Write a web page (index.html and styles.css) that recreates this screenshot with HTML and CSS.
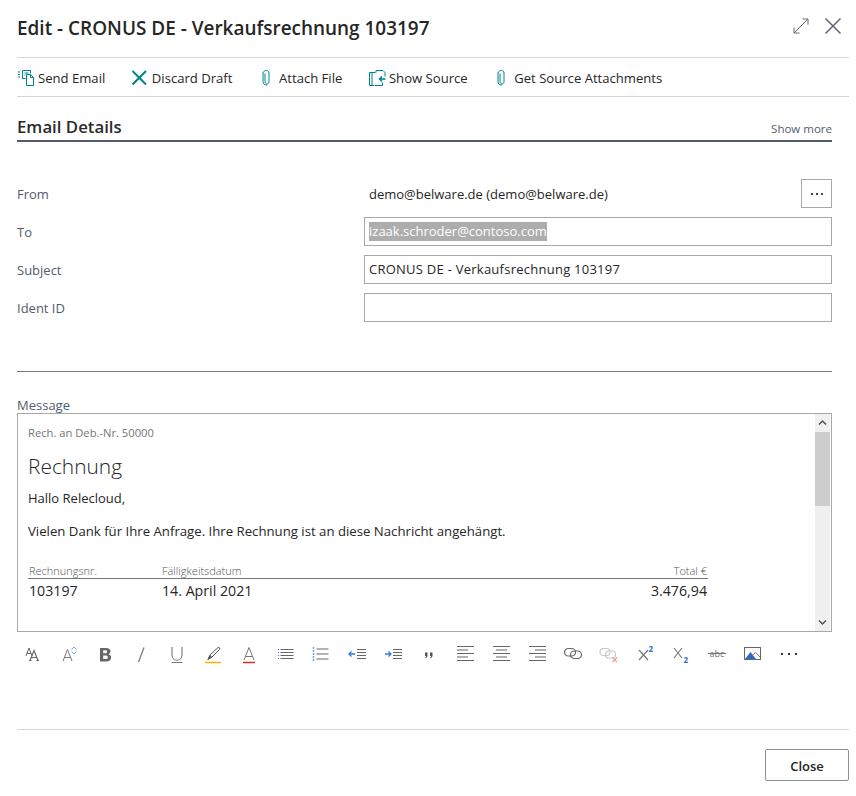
FILE: index.html
```html
<!DOCTYPE html>
<html lang="en">
<head>
<meta charset="UTF-8" />
<title>Edit - CRONUS DE - Verkaufsrechnung 103197</title>
<link rel="stylesheet" href="styles.css">
</head>
<body>
<div class="dialog">
  <div class="title-bar">
    <h1 class="title">Edit - CRONUS DE - Verkaufsrechnung 103197</h1>
    <div class="window-btns">
      <svg width="16" height="16" viewBox="0 0 16 16" fill="none" stroke="#6b6b6b" stroke-width="1"><path d="M1 15 15 1M9.500 1H15V6.500M1 9.500V15H6.500"/></svg>
      <svg width="18" height="18" viewBox="0 0 18 18" fill="none" stroke="#5f6670" stroke-width="1.500"><path d="M1.500 1.500 16.500 16.500M16.500 1.500 1.500 16.500"/></svg>
    </div>
  </div>

  <div class="command-bar">
    <button class="cmd">
      <svg class="cmd-icon" viewBox="0 0 21 18" fill="none" stroke="#00828a"><path d="M1 3h2M1 5.500h2M1 8h2M5.500 1.500h8v3M5.500 1.500v8h3M7.500 4h4M7.500 6h1"/><path d="M9.500 5.500h4l3 3v8h-7zM13.500 5.500v3h3"/></svg>
      <span>Send Email</span>
    </button>
    <button class="cmd">
      <svg class="cmd-icon" viewBox="0 0 21 18" fill="none" stroke="#00828a" stroke-width="2"><path d="M1.500 2 15 15.500M15 2 1.500 15.500"/></svg>
      <span>Discard Draft</span>
    </button>
    <button class="cmd">
      <svg class="cmd-icon" viewBox="0 0 21 18" fill="none" stroke="#00828a"><path d="M7 4.500v8c0 1.500 1 2.500 2 2.500s2-1 2-2.500v-8.500c0-1.700-1-2.500-2.500-2.500s-3.500.8-3.500 2.500v8.500c0 2.500 1.500 3.500 4 3.500"/></svg>
      <span>Attach File</span>
    </button>
    <button class="cmd">
      <svg class="cmd-icon" viewBox="0 0 21 18" fill="none" stroke="#00828a"><path d="M8 3.500v-2h7l2 2v4M6 16.500h-4.500V3.500h6M4 3.500v13M6.500 16.500h8v-3"/><path d="M17.500 10h-6M14 7.500 11.500 10 14 12.500" stroke-width="1.500"/></svg>
      <span>Show Source</span>
    </button>
    <button class="cmd">
      <svg class="cmd-icon" viewBox="0 0 21 18" fill="none" stroke="#00828a"><path d="M7 4.500v8c0 1.500 1 2.500 2 2.500s2-1 2-2.500v-8.500c0-1.700-1-2.500-2.500-2.500s-3.500.8-3.500 2.500v8.500c0 2.500 1.500 3.500 4 3.500"/></svg>
      <span>Get Source Attachments</span>
    </button>
  </div>

  <div class="content">
    <div class="section-head">
      <h2>Email Details</h2>
      <span class="show-more">Show more</span>
    </div>

    <div class="form">
      <label class="label">From</label>
      <div class="from-value">
        <span>demo@belware.de (demo@belware.de)</span>
        <button class="dots-btn" aria-label="More">
          <svg width="14" height="4" viewBox="0 0 14 4" fill="#444"><rect x="1" y="1" width="2" height="2"/><rect x="6" y="1" width="2" height="2"/><rect x="11" y="1" width="2" height="2"/></svg>
        </button>
      </div>
      <label class="label">To</label>
      <div class="input"><span class="selected">izaak.schroder@contoso.com</span></div>
      <label class="label">Subject</label>
      <div class="input subject">CRONUS DE - Verkaufsrechnung 103197</div>
      <label class="label">Ident ID</label>
      <div class="input"></div>
    </div>

    <div class="message-label">Message</div>
    <div class="editor">
      <div class="editor-body">
        <p class="bill-to">Rech. an Deb.-Nr. 50000</p>
        <p class="doc-title">Rechnung</p>
        <p class="greeting">Hallo Relecloud,</p>
        <p class="thanks">Vielen Dank für Ihre Anfrage. Ihre Rechnung ist an diese Nachricht angehängt.</p>
        <div class="invoice">
          <span class="inv-head">Rechnungsnr.</span>
          <span class="inv-head">Fälligkeitsdatum</span>
          <span class="inv-head amount">Total €</span>
          <span class="inv-cell">103197</span>
          <span class="inv-cell">14. April 2021</span>
          <span class="inv-cell amount">3.476,94</span>
        </div>
      </div>
      <div class="scrollbar">
        <svg width="15" height="18" viewBox="0 0 15 18" fill="none" stroke="#505050" stroke-width="1.500"><path d="M4 10.500 7.500 7 11 10.500"/></svg>
        <div class="scroll-track"><div class="scroll-thumb"></div></div>
        <svg width="15" height="18" viewBox="0 0 15 18" fill="none" stroke="#505050" stroke-width="1.500"><path d="M4 7.500 7.500 11 11 7.500"/></svg>
      </div>
    </div>

    <div class="format-bar">
      <button class="fmt"><svg viewBox="0 0 24 24" fill="none" stroke="#666"><path d="M5 14 8 6 11 14M6 11.500h4"/><path d="M9 18.500 13 8.500 17 18.500M10.500 15.500h5" stroke-width="1.200"/><path d="M8 18.500h2.500M15.500 18.500h2.500" stroke-width="1"/></svg></button>
      <button class="fmt"><svg viewBox="0 0 24 24" fill="none" stroke="#777"><path d="M6 19 10.500 7.500 15 19M7.500 15.500h6"/><path d="M14.500 7.500 17 5 19.500 7.500M14.500 9.500 17 12 19.500 9.500" stroke="#4a90e2" stroke-width=".8"/></svg></button>
      <button class="fmt"><svg viewBox="0 0 24 24" fill="#666"><path fill-rule="evenodd" d="M7 6h6c3 0 4.500 1.300 4.500 3.200 0 1.500-.9 2.500-2.300 3 1.800.3 2.900 1.500 2.900 3.300 0 2.500-1.900 3.900-5 3.900H7zM10.200 8.300v3h2.300c1 0 1.700-.6 1.700-1.500s-.6-1.500-1.700-1.500zM10.200 13.400v3.700h2.600c1.300 0 2-.7 2-1.900s-.8-1.800-2.100-1.800z"/></svg></button>
      <button class="fmt"><svg viewBox="0 0 24 24" fill="none" stroke="#777" stroke-width="1.200"><path d="M15 5.500 9.500 20"/></svg></button>
      <button class="fmt"><svg viewBox="0 0 24 24" fill="none" stroke="#777"><path d="M7 5v8c0 7 10 7 10 0V5M6.500 20.500h11" stroke-width="1.100"/></svg></button>
      <button class="fmt"><svg viewBox="0 0 24 24" fill="none"><path d="M7 17.500 9 13 17 5.500c1-.8 2.500.8 1.700 1.800L11 15z" stroke="#555"/><path d="M6 18 9 13l2 2z" fill="#555"/><path d="M4 20.500h16" stroke="#f2b705" stroke-width="1.500"/></svg></button>
      <button class="fmt"><svg viewBox="0 0 24 24" fill="none" stroke="#777"><path d="M7 18 12 5.500 17 18M8.500 14.500h7"/><path d="M6 20.500h12" stroke="#e02b20" stroke-width="1.500"/></svg></button>
      <button class="fmt"><svg viewBox="0 0 24 24" fill="none" stroke="#666"><path d="M7.500 7.500h13M7.500 10.500h13M7.500 13.500h13M7.500 16.500h13" stroke-width="1.100"/><path d="M5 7.500h1M5 10.500h1M5 13.500h1M5 16.500h1" stroke="#3a7bd5"/></svg></button>
      <button class="fmt"><svg viewBox="0 0 24 24" fill="none" stroke="#666"><path d="M7.500 7h12M7.500 12h12M7.500 17h12" stroke-width="1.100"/><path d="M4.500 5v14" stroke="#6aa5ec" stroke-width="1.500" stroke-dasharray="2 1"/></svg></button>
      <button class="fmt"><svg viewBox="0 0 24 24" fill="none" stroke="#666"><path d="M12 7.500h9M12 10.500h9M12 13.500h9M12 16.500h9" stroke-width="1.100"/><path d="M10 12H4M6.500 9.500 4 12 6.500 14.500" stroke="#2b7fe0" stroke-width="1.300"/></svg></button>
      <button class="fmt"><svg viewBox="0 0 24 24" fill="none" stroke="#666"><path d="M12 7.500h9M12 10.500h9M12 13.500h9M12 16.500h9" stroke-width="1.100"/><path d="M4 12h6M7.500 9.500 10 12 7.500 14.500" stroke="#2b7fe0" stroke-width="1.300"/></svg></button>
      <button class="fmt"><svg viewBox="0 0 24 24" fill="#555"><path d="M8 10.500h2.500v3c0 1.500-.8 2.500-2 2.800l-.3-.8c.7-.3 1-.8 1-1.500H8zM13 10.500h2.500v3c0 1.500-.8 2.500-2 2.800l-.3-.8c.7-.3 1-.8 1-1.500H13z"/></svg></button>
      <button class="fmt"><svg viewBox="0 0 24 24" fill="none" stroke="#666" stroke-width="1.100"><path d="M4 4.500h17M4 8h11M4 11.500h17M4 15h11M4 18.500h17"/></svg></button>
      <button class="fmt"><svg viewBox="0 0 24 24" fill="none" stroke="#666" stroke-width="1.100"><path d="M4 4.500h17M7 8h11M4 11.500h17M7 15h11M4 18.500h17"/></svg></button>
      <button class="fmt"><svg viewBox="0 0 24 24" fill="none" stroke="#666" stroke-width="1.100"><path d="M4 4.500h17M10 8h11M4 11.500h17M10 15h11M4 18.500h17"/></svg></button>
      <button class="fmt"><svg viewBox="0 0 24 24" fill="none" stroke="#666" stroke-width="1.200"><rect x="3.500" y="6.500" width="11" height="7.500" rx="3.700"/><rect x="9.500" y="9" width="11" height="7.500" rx="3.700"/></svg></button>
      <button class="fmt"><svg viewBox="0 0 24 24" fill="none" stroke="#c8c8c8" stroke-width="1.200"><rect x="3" y="6.500" width="10" height="7" rx="3.500"/><rect x="8.500" y="9" width="10" height="7" rx="3.500"/><path d="M15.500 15.500 20 20M20 15.500 15.500 20" stroke="#ec9f93"/></svg></button>
      <button class="fmt"><svg viewBox="0 0 24 24" fill="none" stroke="#777"><path d="M6 8 15 18M15 8 6 18" stroke-width="1.200"/><text x="15.500" y="10" class="script-num">2</text></svg></button>
      <button class="fmt"><svg viewBox="0 0 24 24" fill="none" stroke="#777"><path d="M5 6 13 16M13 6 5 16" stroke-width="1.200"/><text x="14.500" y="20.500" class="script-num">2</text></svg></button>
      <button class="fmt"><svg viewBox="0 0 24 24" fill="none"><text x="12" y="14.500" class="strike-text">abc</text><path d="M3 11.500h18" stroke="#777"/></svg></button>
      <button class="fmt"><svg viewBox="0 0 24 24" fill="none"><rect x="3.500" y="5.500" width="16" height="12" stroke="#666"/><path d="M4 17 9.500 10 15 17z" fill="#2b6cc4"/><path d="M12 13 14.500 10.500 19 15" stroke="#777"/></svg></button>
      <button class="fmt"><svg viewBox="0 0 24 24" fill="#333"><rect x="4" y="11" width="2" height="2"/><rect x="11" y="11" width="2" height="2"/><rect x="18" y="11" width="2" height="2"/></svg></button>
    </div>
  </div>

  <div class="footer">
    <button class="close-btn">Close</button>
  </div>
</div>
</body>
</html>
```

FILE: styles.css
```css
:root {
  --text: #262626;
  --label: #505c6d;
  --line: #d4d4d8;
  --field: #a8a8a8;
}
html, body {
  margin: 0;
  padding: 0;
  background: #fff;
  color: var(--text);
  font-family: 'Open Sans', 'Noto Sans', Arial, sans-serif;
  font-size: 13px;
}
button {
  font-family: inherit;
  background: none;
  border: none;
  padding: 0;
  color: inherit;
}
p {
  margin: 0;
}
.dialog {
  width: 856px;
  height: 796px;
  padding: 0 7px 0 17px;
  box-sizing: border-box;
}
.title-bar {
  height: 58px;
  box-sizing: border-box;
  border-bottom: 1px solid var(--line);
  display: flex;
  justify-content: space-between;
  align-items: flex-start;
}
.title {
  margin: 14px 0 0 0;
  font-size: 18.950px;
  line-height: 28px;
  font-weight: 600;
}
.window-btns {
  display: flex;
  align-items: center;
  gap: 15px;
  margin: 17px 7px 0 0;
}
.command-bar {
  height: 39px;
  box-sizing: border-box;
  border-bottom: 1px solid var(--line);
  display: flex;
  align-items: center;
  gap: 25.600px;
}
.cmd {
  display: flex;
  align-items: center;
  font-size: 13.100px;
  line-height: 20px;
  padding-top: 1px;
  white-space: nowrap;
}
.cmd-icon {
  width: 21px;
  height: 18px;
  flex: none;
}
.content {
  width: 815px;
}
.section-head {
  height: 45px;
  box-sizing: border-box;
  border-bottom: 2px solid var(--label);
  display: flex;
  justify-content: space-between;
  align-items: flex-end;
  padding-bottom: 2px;
}
.section-head h2 {
  margin: 0 0 -1px 0;
  font-size: 16.800px;
  line-height: 24px;
  font-weight: 600;
  color: #2b2b2b;
}
.show-more {
  font-size: 11.500px;
  line-height: 18px;
  color: var(--label);
}
.form {
  margin-top: 37px;
  display: grid;
  grid-template-columns: 347px 1fr;
  grid-auto-rows: 29px;
  row-gap: 9px;
  align-items: center;
  padding-bottom: 49px;
  border-bottom: 1px solid #77797c;
}
.label {
  color: var(--label);
}
.from-value {
  display: flex;
  justify-content: space-between;
  align-items: center;
  padding-left: 5px;
}
.dots-btn {
  width: 31px;
  height: 29px;
  border: 1px solid var(--field);
  box-sizing: border-box;
  display: flex;
  align-items: center;
  justify-content: center;
}
.input {
  height: 29px;
  box-sizing: border-box;
  border: 1px solid var(--field);
  padding: 0 4px;
  line-height: 27px;
  white-space: nowrap;
}
.subject {
  letter-spacing: 0.250px;
}
.selected {
  display: inline-block;
  background: #adadad;
  color: #fff;
  line-height: 19px;
}
.message-label {
  height: 41px;
  line-height: 18px;
  box-sizing: border-box;
  padding-top: 24px;
  color: var(--label);
}
.editor {
  height: 219px;
  box-sizing: border-box;
  border: 1px solid var(--field);
  display: flex;
  overflow: hidden;
}
.editor-body {
  flex: 1;
  padding: 10px 0 0 10px;
  font-size: 13px;
}
.bill-to {
  font-size: 11.200px;
  line-height: 18px;
  color: #757575;
}
.doc-title {
  margin-top: 10px;
  font-size: 20.900px;
  line-height: 28px;
  font-weight: 300;
}
.greeting {
  margin-top: 8px;
  line-height: 20px;
}
.thanks {
  margin-top: 13px;
  font-size: 13.200px;
  line-height: 20px;
}
.invoice {
  margin-top: 22px;
  width: 680px;
  display: grid;
  grid-template-columns: 133px 1fr auto;
}
.inv-head {
  font-size: 11px;
  font-weight: 300;
  line-height: 15px;
  color: #555;
  padding: 0 1px;
  border-bottom: 1px solid #777;
}
.inv-cell {
  font-size: 14.200px;
  line-height: 24px;
  padding: 0 1px;
}
.amount {
  text-align: right;
}
.scrollbar {
  width: 15px;
  margin-right: 1px;
  background: #f0f0f0;
  display: flex;
  flex-direction: column;
}
.scroll-track {
  flex: 1;
}
.scroll-thumb {
  height: 74px;
  background: #cdcdcd;
}
.format-bar {
  display: flex;
  margin: 10px 0 0 -2px;
}
.fmt {
  width: 36px;
  height: 24px;
  display: flex;
  justify-content: center;
}
.fmt svg {
  width: 24px;
  height: 24px;
}
.script-num {
  font-family: 'Open Sans', sans-serif;
  font-size: 8px;
  font-weight: 700;
  fill: #2b6cc4;
  stroke: none;
}
.strike-text {
  font-family: 'Open Sans', sans-serif;
  font-size: 9px;
  fill: #777;
  text-anchor: middle;
}
.footer {
  margin-top: 63px;
  padding-top: 19px;
  border-top: 1px solid var(--line);
  display: flex;
  justify-content: flex-end;
}
.close-btn {
  width: 84px;
  height: 32px;
  box-sizing: border-box;
  border: 1px solid #8f8f8f;
  border-radius: 2px;
  padding-top: 2px;
  font-size: 13px;
  font-weight: 600;
}
```
